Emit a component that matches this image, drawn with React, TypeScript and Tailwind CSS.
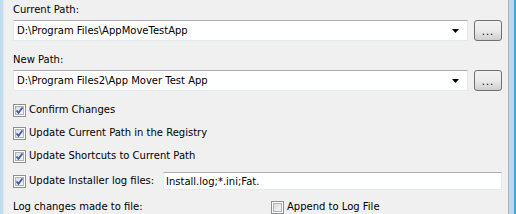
import React from 'react';

const font = "font-['DejaVu_Sans','Tahoma',sans-serif] text-[10px] text-black";

function CheckBox({ checked }: { checked: boolean }) {
  return (
    <span className="w-[13px] h-[13px] shrink-0 border border-[#8f8f8f] bg-white p-[1px] flex">
      <span className="flex-1 border border-[#aeb3b9] bg-gradient-to-br from-[#dcdcdc] to-[#f6f6f6] flex items-center justify-center">
        {checked && (
          <svg width="9" height="9" viewBox="0 0 9 9" className="-m-[2px]">
            <path d="M1.5 4.5 L3.5 6.8 L7.5 1.5" fill="none" stroke="#3d5a9b" strokeWidth="1.8" />
          </svg>
        )}
      </span>
    </span>
  );
}

function CheckRow({ label, checked = true }: { label: string; checked?: boolean }) {
  return (
    <label className="flex items-center gap-[3px] h-[14px]">
      <CheckBox checked={checked} />
      <span className="leading-[14px] whitespace-nowrap">{label}</span>
    </label>
  );
}

function PathCombo({ value }: { value: string }) {
  return (
    <div className="flex items-center gap-[6px] h-[21px]">
      <div className="flex-1 h-full bg-white border border-[#e3e9ef] border-t-[#abadb3] flex items-center pl-[3px] pr-[8px]">
        <span className="flex-1 whitespace-nowrap">{value}</span>
        <svg width="7" height="4" viewBox="0 0 7 4">
          <path d="M0 0 H7 L3.5 4 Z" fill="#000" />
        </svg>
      </div>
      <button className="w-[28px] h-[21px] rounded-[3px] border border-[#707070] bg-gradient-to-b from-[#f2f2f2] via-[#ebebeb] to-[#cfcfcf] flex items-end justify-center pb-[4px] text-[10px] leading-[8px] tracking-[1px]">
        ...
      </button>
    </div>
  );
}

export default function App() {
  return (
    <div className={`w-[516px] h-[214px] flex overflow-hidden ${font}`}>
      <div className="w-[4px] bg-[#c4daef] border-r border-[#dde8f3]" />
      <div className="flex-1 bg-[#f0f0f0] pl-[9px] pr-[6px] pt-[3px] flex flex-col">
        <div className="leading-[14px] h-[14px]">Current Path:</div>
        <div className="mt-[3px]">
          <PathCombo value="D:\Program Files\AppMoveTestApp" />
        </div>
        <div className="mt-[12px] leading-[14px] h-[14px]">New Path:</div>
        <div className="mt-[3px]">
          <PathCombo value="D:\Program Files2\App Mover Test App" />
        </div>
        <div className="mt-[12px]">
          <CheckRow label="Confirm Changes" />
        </div>
        <div className="mt-[9px]">
          <CheckRow label="Update Current Path in the Registry" />
        </div>
        <div className="mt-[9px]">
          <CheckRow label="Update Shortcuts to Current Path" />
        </div>
        <div className="mt-[9px] flex items-center h-[21px]">
          <div className="w-[150px] shrink-0">
            <CheckRow label="Update Installer log files:" />
          </div>
          <div className="flex-1 h-full bg-white border border-[#e3e9ef] border-t-[#abadb3] flex items-center pl-[2px]">
            Install.log;*.ini;Fat.
          </div>
        </div>
        <div className="mt-[10px] flex items-center h-[14px]">
          <div className="w-[258px] shrink-0 leading-[14px] whitespace-nowrap">Log changes made to file:</div>
          <CheckRow label="Append to Log File" checked={false} />
        </div>
      </div>
      <div className="w-[8px] bg-[#c0d6ec] border-l border-[#9fb5cc] border-r-2 border-r-[#4aa3e0]" />
    </div>
  );
}
